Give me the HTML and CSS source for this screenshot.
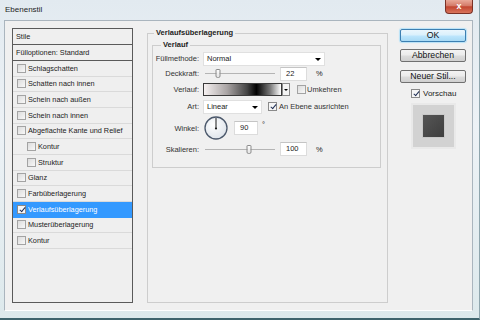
FILE: index.html
```html
<!DOCTYPE html>
<html lang="de">
<head>
    <meta charset="UTF-8">
    <meta name="viewport" content="width=device-width, initial-scale=1.0">
    <title>Ebenenstil</title>
    <link rel="stylesheet" href="styles.css">
</head>
<body>

<div class="window">
    <div class="titlebar">
        <span class="title">Ebenenstil</span>
        <div class="close-btn">x</div>
    </div>

    <div class="client">
        <!-- Style list on the left -->
        <div class="style-list">
            <div class="list-head">Stile</div>
            <div class="list-head">Fülloptionen: Standard</div>
            <div class="list-item"><span class="cb"></span>Schlagschatten</div>
            <div class="list-item"><span class="cb"></span>Schatten nach innen</div>
            <div class="list-item"><span class="cb"></span>Schein nach außen</div>
            <div class="list-item"><span class="cb"></span>Schein nach innen</div>
            <div class="list-item"><span class="cb"></span>Abgeflachte Kante und Relief</div>
            <div class="list-item sub"><span class="cb"></span>Kontur</div>
            <div class="list-item sub"><span class="cb"></span>Struktur</div>
            <div class="list-item"><span class="cb"></span>Glanz</div>
            <div class="list-item"><span class="cb"></span>Farbüberlagerung</div>
            <div class="list-item selected"><span class="cb checked"></span>Verlaufsüberlagerung</div>
            <div class="list-item"><span class="cb"></span>Musterüberlagerung</div>
            <div class="list-item"><span class="cb"></span>Kontur</div>
        </div>

        <!-- Settings for the selected effect -->
        <fieldset class="group outer">
            <legend>Verlaufsüberlagerung</legend>
            <fieldset class="group inner">
                <legend>Verlauf</legend>
                <div class="form-grid">
                    <span class="label">Füllmethode:</span>
                    <div class="controls">
                        <div class="select mode">Normal</div>
                    </div>

                    <span class="label">Deckkraft:</span>
                    <div class="controls">
                        <div class="slider"><span class="thumb" style="left: 19%"></span></div>
                        <div class="field num">22</div>
                        <span class="unit">%</span>
                    </div>

                    <span class="label">Verlauf:</span>
                    <div class="controls">
                        <div class="swatch"></div>
                        <div class="swatch-btn"></div>
                        <span class="cb gap-cb"></span>
                        <span class="cb-text">Umkehren</span>
                    </div>

                    <span class="label">Art:</span>
                    <div class="controls">
                        <div class="select kind">Linear</div>
                        <span class="cb checked kind-cb"></span>
                        <span class="cb-text">An Ebene ausrichten</span>
                    </div>

                    <span class="label">Winkel:</span>
                    <div class="controls">
                        <svg class="dial" width="24" height="24" viewBox="0 0 24 24">
                            <defs>
                                <radialGradient id="dialFill" cx="40%" cy="35%" r="70%">
                                    <stop offset="0" stop-color="#ffffff"/>
                                    <stop offset="1" stop-color="#dde3ea"/>
                                </radialGradient>
                            </defs>
                            <circle cx="12" cy="12" r="11" fill="url(#dialFill)" stroke="#4b586b" stroke-width="1.3"/>
                            <line x1="12" y1="12.5" x2="12" y2="2" stroke="#1a1a1a" stroke-width="1"/>
                            <circle cx="12" cy="12.5" r="1.1" fill="#1a1a1a"/>
                        </svg>
                        <div class="field angle">90</div>
                        <span class="degree">°</span>
                    </div>

                    <span class="label">Skalieren:</span>
                    <div class="controls">
                        <div class="slider"><span class="thumb" style="left: 63%"></span></div>
                        <div class="field num">100</div>
                        <span class="unit">%</span>
                    </div>
                </div>
            </fieldset>
        </fieldset>

        <!-- Dialog buttons -->
        <div class="buttons">
            <button class="btn default">OK</button>
            <button class="btn">Abbrechen</button>
            <button class="btn">Neuer Stil...</button>
            <div class="preview-check"><span class="cb checked"></span>Vorschau</div>
            <div class="preview">
                <div class="preview-square"></div>
            </div>
        </div>
    </div>
</div>

</body>
</html>
```

FILE: styles.css
```css
/* Base body styling */
body {
    margin: 0;
    padding: 0;
    font-family: 'Liberation Sans', Arial, sans-serif;
    color: #222;
    overflow: hidden;
}

/* Window frame */
.window {
    width: 480px;
    height: 320px;
    box-sizing: border-box;
    display: flex;
    flex-direction: column;
    padding: 0 6px 7px 4px;
    background: linear-gradient(to bottom, #e2eaf0 0%, #edf2f6 40%, #dde9ec 100%);
    border-right: 1px solid #8ea5ad;
    border-bottom: 2px solid #3f646d;
}

.titlebar {
    height: 20px;
    flex-shrink: 0;
    display: flex;
    justify-content: space-between;
    align-items: flex-start;
}

.title {
    font-size: 8px;
    line-height: 10px;
    margin: 5px 0 0 1px;
    color: #1e1e1e;
}

.close-btn {
    width: 28px;
    height: 14px;
    box-sizing: border-box;
    margin-right: 0;
    border: 1px solid #7a3126;
    border-top: none;
    border-radius: 0 0 4px 4px;
    background: linear-gradient(to bottom, #e9a999 0%, #d47a68 45%, #c24530 52%, #d9755c 100%);
    color: #fff;
    font-size: 9px;
    font-weight: bold;
    line-height: 12px;
    text-align: center;
}

/* Client area */
.client {
    flex: 1;
    display: flex;
    align-items: flex-start;
    padding: 7px 0 0 7px;
    background-color: #f0f0f0;
    border: 1px solid #aab5be;
    border-bottom-color: #ffffff;
}

/* Style list */
.style-list {
    width: 121px;
    height: 275px;
    box-sizing: border-box;
    border: 1px solid #5a5a5a;
    background-color: #efefef;
    font-size: 7.3px;
    flex-shrink: 0;
}

.list-head {
    height: 16px;
    box-sizing: border-box;
    border-bottom: 1px solid #5a5a5a;
    padding-left: 3px;
    display: flex;
    align-items: center;
}

.list-item {
    height: 15.67px;
    box-sizing: border-box;
    border-bottom: 1px solid #dadada;
    padding-left: 4px;
    display: flex;
    align-items: center;
}

.list-item.sub {
    padding-left: 14px;
}

.list-item.selected {
    background-color: #3399ff;
    color: #fff;
    border-bottom-color: #3399ff;
}

/* Checkbox styling */
.cb {
    position: relative;
    display: inline-block;
    width: 9px;
    height: 9px;
    box-sizing: border-box;
    border: 1px solid #a3a3a3;
    background: linear-gradient(135deg, #dcdcdc, #f8f8f8);
    margin-right: 2px;
    flex-shrink: 0;
}

.cb.checked {
    border-color: #8a8a8a;
    background: #f6f6f6;
}

.cb.checked::after {
    content: "";
    position: absolute;
    left: 2.5px;
    top: 0;
    width: 2px;
    height: 5px;
    border-right: 1.5px solid #1f2f55;
    border-bottom: 1.5px solid #1f2f55;
    transform: rotate(40deg);
}

/* Group boxes */
.group {
    margin: 0;
    min-width: 0;
    box-sizing: border-box;
    border: 1px solid #cdcdcd;
}

.group legend {
    font-size: 7.5px;
    font-weight: bold;
    line-height: 10px;
    color: #222;
    padding: 0 2px;
}

.group.outer {
    width: 241px;
    height: 275px;
    margin-left: 14px;
    padding: 0 6px 0 4px;
    flex-shrink: 0;
}

.group.outer > legend {
    margin-left: 2px;
}

.group.inner {
    margin-top: 2px;
    padding: 1px 0 10px 0;
}

.group.inner > legend {
    margin-left: 8px;
}

/* Form rows */
.form-grid {
    display: grid;
    grid-template-columns: 46px 1fr;
    grid-template-rows: 15px 15px 17px 17px 26px 16px;
    column-gap: 4px;
    align-items: center;
    font-size: 7.5px;
}

.label {
    text-align: right;
    color: #333;
}

.controls {
    display: flex;
    align-items: center;
}

.select {
    position: relative;
    height: 14px;
    box-sizing: border-box;
    background-color: #fff;
    border: 1px solid #e0e0e0;
    padding-left: 3px;
    line-height: 12px;
}

.select::after {
    content: "";
    position: absolute;
    right: 3px;
    top: 5px;
    border-left: 3px solid transparent;
    border-right: 3px solid transparent;
    border-top: 3px solid #000;
}

.select.mode {
    width: 122px;
}

.select.kind {
    width: 59px;
}

.slider {
    position: relative;
    width: 70px;
    height: 9px;
    margin-left: 2px;
}

.slider::before {
    content: "";
    position: absolute;
    left: 0;
    right: 0;
    top: 4px;
    border-top: 1px solid #b4b4b4;
}

.thumb {
    position: absolute;
    top: 0;
    width: 5px;
    height: 9px;
    box-sizing: border-box;
    transform: translateX(-50%);
    border: 1px solid #8c8c8c;
    border-radius: 1px 1px 2px 2px;
    background: linear-gradient(to bottom, #fdfdfd, #e4e4e4);
}

.field {
    height: 14px;
    box-sizing: border-box;
    background-color: #fff;
    border: 1px solid #dcdcdc;
    border-top-color: #c4c4c4;
    line-height: 12px;
    padding-left: 5px;
}

.field.num {
    width: 27px;
    margin-left: 5px;
}

.field.angle {
    width: 24px;
    margin-left: 6px;
}

.unit {
    margin-left: 9px;
}

.degree {
    margin-left: 4px;
    align-self: flex-start;
    margin-top: 4px;
}

.swatch {
    width: 79px;
    height: 13px;
    box-sizing: border-box;
    border: 1px solid #3a3a3a;
    background: linear-gradient(to right, #f6f1f1 0%, #a9a4a4 30%, #444 56%, #000 68%, #7a7a7a 86%, #fff 100%);
}

.swatch-btn {
    position: relative;
    width: 8px;
    height: 13px;
    box-sizing: border-box;
    border: 1px solid #8a8a8a;
    background: #f4f4f4;
}

.swatch-btn::after {
    content: "";
    position: absolute;
    left: 1px;
    top: 5px;
    border-left: 2px solid transparent;
    border-right: 2px solid transparent;
    border-top: 2px solid #000;
}

.gap-cb {
    margin-left: 7px;
    margin-right: 1px;
}

.kind-cb {
    margin-left: 6px;
}

.cb-text {
    color: #333;
}

.dial {
    display: block;
    margin-left: 1px;
}

/* Button column */
.buttons {
    width: 66px;
    margin-left: 12px;
    margin-top: 1px;
    display: flex;
    flex-direction: column;
    flex-shrink: 0;
}

.btn {
    height: 13px;
    padding: 0;
    box-sizing: border-box;
    border: 1px solid #707070;
    border-radius: 2px;
    background: linear-gradient(to bottom, #f3f3f3 0%, #ebebeb 48%, #dcdcdc 52%, #d0d0d0 100%);
    font-family: 'Liberation Sans', Arial, sans-serif;
    font-size: 8.7px;
    line-height: 11px;
    color: #111;
    margin-bottom: 7px;
}

.btn:nth-child(2) {
    margin-bottom: 8px;
}

.btn.default {
    border-color: #3c7fb1;
    background: linear-gradient(to bottom, #eaf6fd 0%, #d9f0fc 48%, #bee6fd 52%, #a7d9f5 100%);
    box-shadow: 0 0 1px 1px #b7e2f7;
}

.preview-check {
    display: flex;
    align-items: center;
    padding-left: 11px;
    margin-top: -3px;
    height: 13px;
    font-size: 8px;
}

.preview-check .cb {
    margin-right: 3px;
}

.preview {
    width: 45px;
    height: 46px;
    box-sizing: border-box;
    margin: 3px 0 0 11px;
    border: 2px solid #e9e9e9;
    background-color: #d2d2d2;
    display: flex;
    align-items: center;
    justify-content: center;
}

.preview-square {
    width: 21px;
    height: 22px;
    background: linear-gradient(135deg, #555 0%, #3e3e3e 100%);
    border: 1px solid #c8c8c8;
}
```
